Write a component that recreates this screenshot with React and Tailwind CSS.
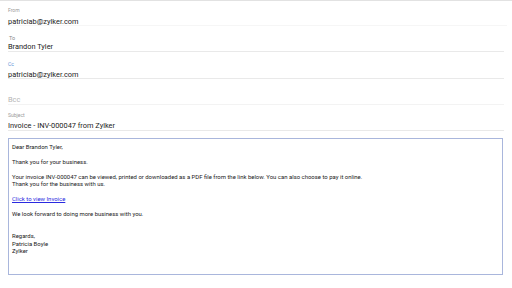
export default function App() {
  const font = { fontFamily: 'Roboto, "Liberation Sans", sans-serif' };
  return (
    <div className="w-[512px] h-[288px] bg-white border-t border-[#e2e2e2] text-[#222]" style={font}>
      <div className="ml-[8px] mr-[5px] h-[25px] border-b border-[#f6f6f6] pt-[6px]">
        <div className="text-[5px] leading-[6px] text-[#9a9a9a]">From</div>
        <div className="text-[7.4px] leading-[10px] mt-[4px]">patriciab@zylker.com</div>
      </div>
      <div className="ml-[8px] mr-[8px] h-[26px] border-b border-[#e9e9e9] pt-[9px]">
        <div className="text-[5.5px] leading-[6px] text-[#8a8a8a] ml-[1px]">To</div>
        <div className="text-[7.4px] leading-[10px] mt-[1px]">Brandon Tyler</div>
      </div>
      <div className="ml-[8px] mr-[8px] h-[27px] border-b border-[#e9e9e9] pt-[9px]">
        <div className="text-[5px] leading-[6px] text-[#5b8fd6]">Cc</div>
        <div className="text-[7.4px] leading-[10px] mt-[3px]">patriciab@zylker.com</div>
      </div>
      <div className="ml-[8px] mr-[8px] h-[26px] border-b border-[#f3f3f3] pt-[16px]">
        <div className="text-[7.4px] leading-[10px] text-[#b5b5b5]">Bcc</div>
      </div>
      <div className="ml-[8px] mr-[8px] h-[26px] border-b border-[#e9e9e9] pt-[7px]">
        <div className="text-[5px] leading-[6px] text-[#9a9a9a]">Subject</div>
        <div className="text-[7.4px] leading-[10px] mt-[3px]">Invoice - INV-000047 from Zylker</div>
      </div>
      <div className="ml-[8px] mr-[9px] mt-[7px] h-[137px] border border-[#a9b6dc] pl-[3px] pt-[4px] text-[5.95px] leading-[7.4px] text-[#1a1a1a]">
        <p>Dear Brandon Tyler,</p>
        <p className="mt-[7.6px]">Thank you for your business.</p>
        <p className="mt-[7.6px]">Your invoice INV-000047 can be viewed, printed or downloaded as a PDF file from the link below. You can also choose to pay it online.</p>
        <p>Thank you for the business with us.</p>
        <p className="mt-[7.4px]"><a className="text-[#2a2ae0] underline">Click to view Invoice</a></p>
        <p className="mt-[7.4px]">We look forward to doing more business with you.</p>
        <p className="mt-[14.8px]">Regards,</p>
        <p>Patricia Boyle</p>
        <p>Zylker</p>
      </div>
    </div>
  );
}
